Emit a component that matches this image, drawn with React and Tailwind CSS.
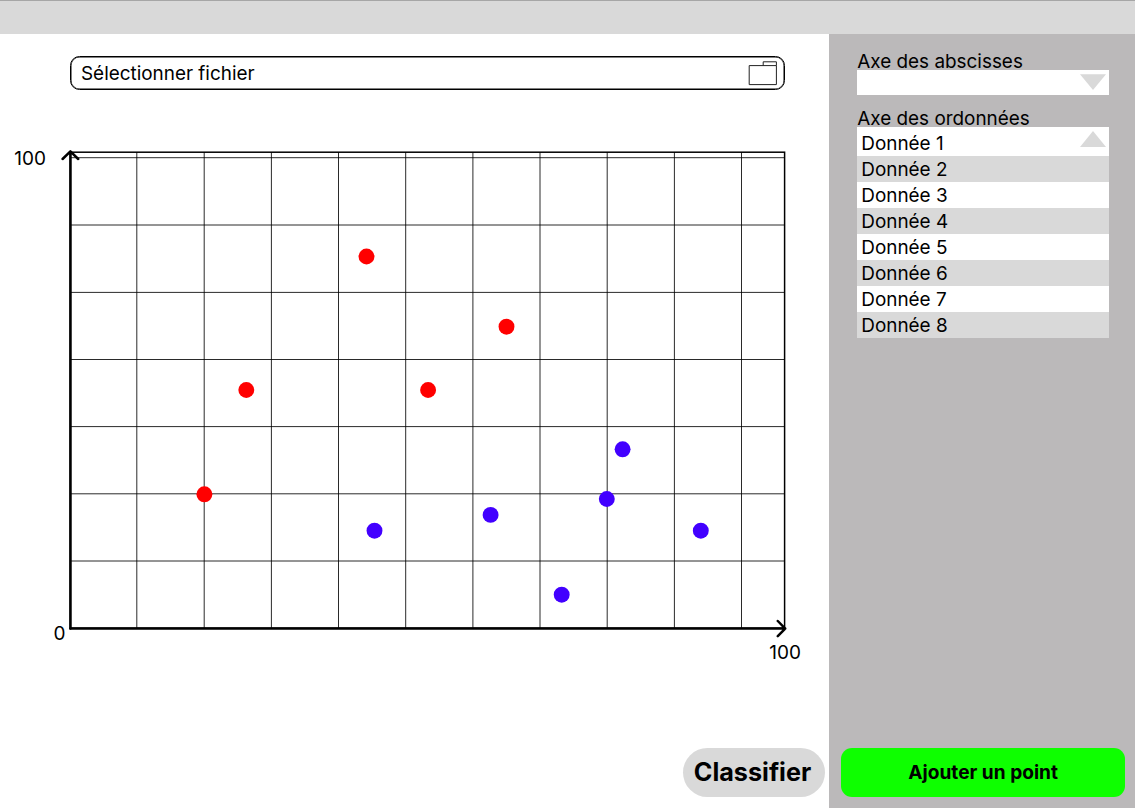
const verticals = [136.8, 204.2, 271.4, 338.5, 405.7, 472.9, 540, 607.2, 674.4, 741.5];
const horizontals = [157.7, 225, 292.4, 359.5, 426.6, 493.8, 561];

const redPoints = [[366.5, 256.5], [506.5, 326.7], [246.3, 390], [428.1, 390], [204.4, 494.3]];
const bluePoints = [[622.6, 449.3], [606.8, 499], [490.6, 514.9], [374.5, 530.7], [700.8, 530.7], [561.7, 594.7]];

const rows = [2, 3, 4, 5, 6, 7, 8];

function FolderIcon() {
  return (
    <svg width="30" height="26" viewBox="0 0 30 26" fill="none" stroke="#222" strokeWidth="1" className="shrink-0">
      <path d="M1.2 5.6H28.4V24.6H1.2Z" />
      <path d="M15.2 5.6V1.8H28.4V5.6" />
    </svg>
  );
}

function Chart() {
  return (
    <svg width="829" height="540" viewBox="0 140 829 540" className="block shrink-0">
      <g stroke="#000" strokeWidth="0.93" strokeOpacity="0.9">
        {verticals.map((x) => <line key={x} x1={x} x2={x} y1="152" y2="628" />)}
        {horizontals.map((y) => <line key={y} x1="70" x2="785" y1={y} y2={y} />)}
      </g>
      <rect x="70.5" y="152.2" width="714.1" height="476" fill="none" stroke="#000" strokeWidth="1.5" />
      <g fill="none" stroke="#000" strokeWidth="2.5" strokeLinecap="round" strokeLinejoin="round">
        <path d="M70.4 628.5V151.6M62.6 159L70.4 151.4L78.2 159" />
        <path d="M70.4 628.6H785.2M777.8 621L785.2 628.6L777.8 636.2" />
      </g>
      {redPoints.map(([x, y]) => <circle key={`${x}-${y}`} cx={x} cy={y} r="7.95" fill="#ff0000" />)}
      {bluePoints.map(([x, y]) => <circle key={`${x}-${y}`} cx={x} cy={y} r="7.95" fill="#4200ff" />)}
      <g fontSize="19" fill="#000">
        <text x="14.2" y="165.3">100</text>
        <text x="53.6" y="640.3">0</text>
        <text x="769.2" y="658.5">100</text>
      </g>
    </svg>
  );
}

export default function App() {
  return (
    <div className="flex h-[808px] w-[1135px] flex-col overflow-hidden bg-white font-['Inter',sans-serif] text-[18.9px] leading-[22px] text-black">
      <header className="h-[34px] shrink-0 border-t border-[#a6a6a6] bg-[#d9d9d9]" />
      <div className="flex min-h-0 flex-1">
        <main className="flex w-[829px] shrink-0 flex-col">
          <div className="mt-[22px] ml-[70px] flex h-[34px] w-[715px] shrink-0 items-center justify-between rounded-[9.5px] border border-black pr-[6px] pl-[10px] shadow-[inset_0_0_0_0.5px_#000]">
            <span className="pt-px">Sélectionner fichier</span>
            <FolderIcon />
          </div>
          <div className="mt-[50px]">
            <Chart />
          </div>
          <button className="mt-[68px] ml-[683px] h-[49px] w-[142px] shrink-0 rounded-[24.5px] bg-[#d9d9d9] pr-[3px] pb-[2px] text-[25.2px] font-bold whitespace-nowrap">
            Classifier
          </button>
        </main>
        <aside className="flex flex-1 flex-col bg-[#bbb9ba] pt-[17px] pr-[10px] pl-[12.3px]">
          <div className="ml-[16px] w-[252.2px]">
            <div className="h-[19.4px] whitespace-nowrap">Axe des abscisses</div>
            <div className="flex h-[24.6px] justify-end bg-white pt-[4px] pr-[3.2px]">
              <svg width="26" height="16" viewBox="0 0 26 16"><path d="M0 0.3H26L13 16Z" fill="#d9d9d9" /></svg>
            </div>
            <div className="mt-[13px] h-[18.6px] whitespace-nowrap">Axe des ordonnées</div>
            <div className="flex h-[29.4px] items-start justify-between bg-white pt-[6px] pr-[3.2px] pl-[4px]">
              <span>Donnée 1</span>
              <svg width="26" height="16" viewBox="0 0 26 16" className="-mt-[2px]"><path d="M0 16H26L13 0Z" fill="#d9d9d9" /></svg>
            </div>
            {rows.map((n) => (
              <div
                key={n}
                className={`flex h-[26.04px] items-center pt-[1.5px] pl-[4px] ${n % 2 === 0 ? "bg-[#d9d9d9]" : "bg-white"}`}
              >
                Donnée {n}
              </div>
            ))}
          </div>
          <button className="mt-auto mb-[11px] h-[49px] shrink-0 rounded-[11px] bg-[#0eff00] pb-[2px] text-[19.1px] font-bold">
            Ajouter un point
          </button>
        </aside>
      </div>
    </div>
  );
}
